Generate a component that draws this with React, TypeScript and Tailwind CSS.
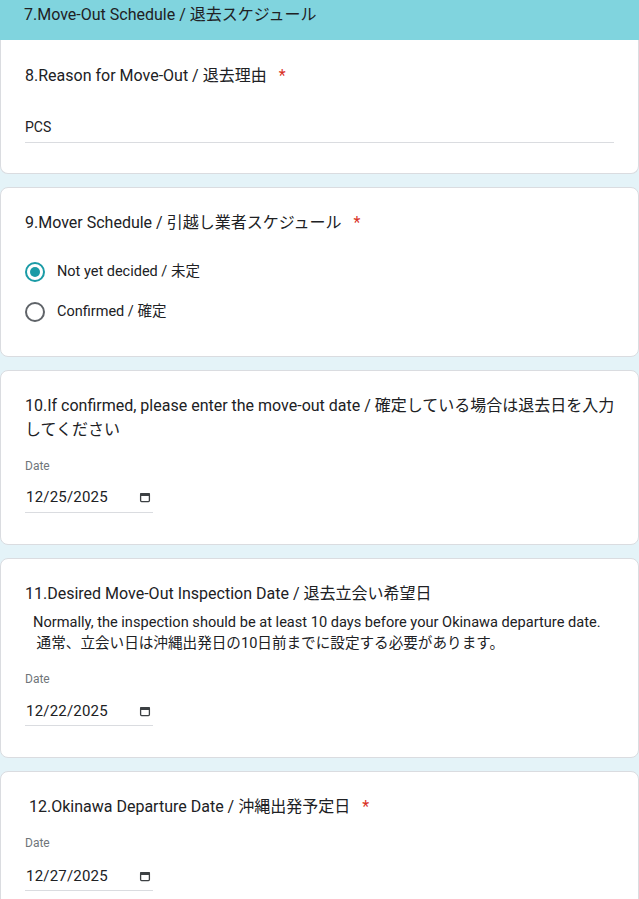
import React from "react";

const font = "font-['Roboto','Noto_Sans_CJK_JP',sans-serif]";

function Req() {
  return <span className="ml-3 text-[#d93025]">*</span>;
}

function CalIcon() {
  return (
    <svg width="12" height="12" viewBox="0 0 12 12" className="shrink-0">
      <rect x="1.6" y="2.6" width="8.8" height="8" rx="1" fill="none" stroke="#3c4043" strokeWidth="1.3" />
      <rect x="1" y="2" width="10" height="3" rx="1" fill="#3c4043" />
    </svg>
  );
}

function DateField({
  label,
  value,
  labelMt = "mt-4",
  dateMt = "mt-[11px]",
  pb = "pb-[3px]",
}: {
  label: string;
  value: string;
  labelMt?: string;
  dateMt?: string;
  pb?: string;
}) {
  return (
    <div>
      <div className={`${labelMt} text-[12px] leading-4 text-[#70757a]`}>{label}</div>
      <div className={`${dateMt} ${pb} w-[128px] border-b border-[#dadce0] flex items-center justify-between`}>
        <span className="pl-[1px] text-[15px] leading-6 text-[#202124] tracking-[0.2px]">{value}</span>
        <span className="mr-[2px] flex items-center">
          <CalIcon />
        </span>
      </div>
    </div>
  );
}

function Radio({ checked, label }: { checked?: boolean; label: string }) {
  return (
    <div className="h-10 flex items-center">
      <div
        className={`w-5 h-5 rounded-full border-2 flex items-center justify-center ${
          checked ? "border-[#1a9ba6]" : "border-[#5f6368]"
        }`}
      >
        {checked && <div className="w-[10px] h-[10px] rounded-full bg-[#1a9ba6]" />}
      </div>
      <span className="ml-[12px] text-[14.5px] text-[#202124]">{label}</span>
    </div>
  );
}

export default function App() {
  return (
    <div className={`${font} w-[639px] min-h-[899px] bg-[#e4f3f8] text-[#202124]`}>
      <div className="h-10 bg-[#80d4de] pl-6 pt-[3px] text-[16px] leading-6">
        7.Move-Out Schedule / 退去スケジュール
      </div>
      <div className="flex flex-col gap-[13px]">
        {/* Card 8 */}
        <div className="bg-white border border-t-0 border-[#dadce0] rounded-b-lg px-6 pt-6 pb-[30px]">
          <div className="text-[16px] leading-6">
            8.Reason for Move-Out / 退去理由
            <Req />
          </div>
          <div className="mt-[27px] border-b border-[#dadce0] pb-[3px] text-[14px] leading-6">PCS</div>
        </div>

        {/* Card 9 */}
        <div className="bg-white border border-[#dadce0] rounded-lg px-6 pt-[23px] pb-[24px]">
          <div className="text-[16px] leading-6">
            9.Mover Schedule / 引越し業者スケジュール
            <Req />
          </div>
          <div className="mt-[17px]">
            <Radio checked label="Not yet decided / 未定" />
            <Radio label="Confirmed / 確定" />
          </div>
        </div>

        {/* Card 10 */}
        <div className="bg-white border border-[#dadce0] rounded-lg px-6 pt-[23px] pb-[31px]">
          <div className="text-[16px] leading-6 -mr-4">
            10.If confirmed, please enter the move-out date / 確定している場合は退去日を入力してください
          </div>
          <DateField label="Date" value="12/25/2025" />
        </div>

        {/* Card 11 */}
        <div className="bg-white border border-[#dadce0] rounded-lg px-6 pt-[23px] pb-[31px]">
          <div className="text-[16px] leading-6">11.Desired Move-Out Inspection Date / 退去立会い希望日</div>
          <div className="mt-[6px] pl-2 text-[14.6px] leading-[21px] whitespace-pre">
            {"Normally, the inspection should be at least 10 days before your Okinawa departure date.\n 通常、立会い日は沖縄出発日の10日前までに設定する必要があります。"}
          </div>
          <DateField label="Date" value="12/22/2025" labelMt="mt-[17px]" dateMt="mt-[12px]" pb="pb-[2px]" />
        </div>

        {/* Card 12 */}
        <div className="bg-white border border-[#dadce0] rounded-lg px-6 pt-[23px] pb-[30px]">
          <div className="text-[16px] leading-6 pl-1">
            12.Okinawa Departure Date / 沖縄出発予定日
            <Req />
          </div>
          <DateField label="Date" value="12/27/2025" labelMt="mt-4" dateMt="mt-[13px]" pb="pb-[2px]" />
        </div>
      </div>
    </div>
  );
}
